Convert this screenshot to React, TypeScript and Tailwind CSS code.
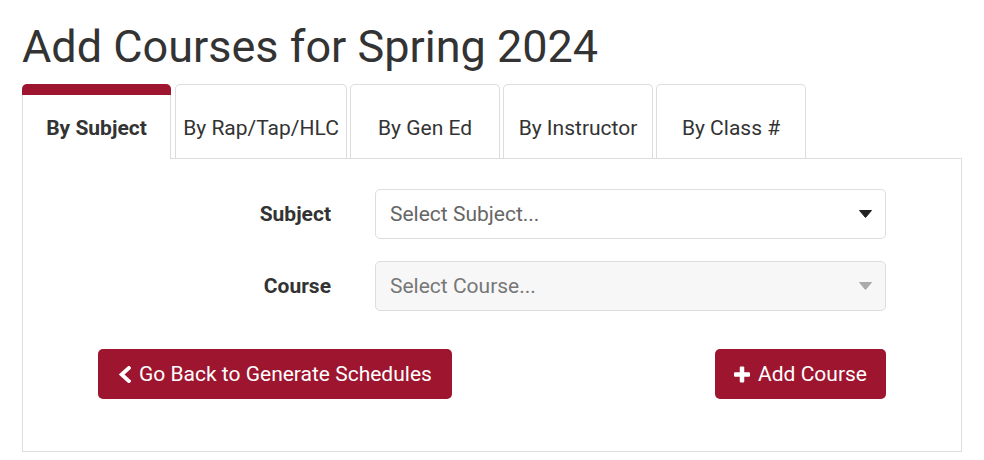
import React from "react";

const tabs = ["By Subject", "By Rap/Tap/HLC", "By Gen Ed", "By Instructor", "By Class #"];
const tabW = ["w-[149px]", "w-[172px]", "w-[150px]", "w-[150px]", "w-[150px]"];

function Caret({ color }: { color: string }) {
  return (
    <svg width="13" height="8" viewBox="0 0 13 8" className="shrink-0">
      <path d="M0.5 0.5 L12.5 0.5 L6.5 7.5 Z" fill={color} stroke={color} strokeWidth="1" strokeLinejoin="round" />
    </svg>
  );
}

function ChevronLeft() {
  return (
    <svg width="13" height="17" viewBox="0 0 13 17" className="shrink-0">
      <path d="M10.8 2 L3.6 8.5 L10.8 15" fill="none" stroke="white" strokeWidth="3.8" strokeLinecap="square" strokeLinejoin="miter" />
    </svg>
  );
}

function Plus() {
  return (
    <svg width="16" height="17" viewBox="0 0 16 17" className="shrink-0">
      <rect x="5.75" y="0.5" width="4.5" height="16" rx="1" fill="white" />
      <rect x="0" y="6.25" width="16" height="4.5" rx="1" fill="white" />
    </svg>
  );
}

export default function App() {
  return (
    <div
      className="w-[984px] h-[460px] bg-white text-[#333] overflow-hidden"
      style={{ fontFamily: "Roboto, 'Liberation Sans', sans-serif" }}
    >
      <div className="pl-[22px] pr-[22px]">
        <h1 className="pt-[20px] text-[45px] leading-[53px] font-normal text-[#333]">
          Add Courses for Spring 2024
        </h1>
        <div className="mt-[11px] flex items-end gap-[3px]">
          {tabs.map((t, i) =>
            i === 0 ? (
              <div
                key={t}
                className={`relative z-10 -mb-px flex h-[75px] ${tabW[i]} flex-col rounded-t-[5px] border-x border-[#ddd] bg-white`}
              >
                <div className="-mx-px h-[11px] rounded-t-[5px] bg-[#9d152e]" />
                <div className="flex flex-1 items-center justify-center pt-[3px] text-[21px] font-bold text-[#333]">
                  {t}
                </div>
              </div>
            ) : (
              <div
                key={t}
                className={`flex h-[74px] ${tabW[i]} items-center justify-center rounded-t-[5px] border border-b-0 border-[#ddd] bg-white pt-[15px] text-[21px] text-[#333] ${
                  i === 1 ? "ml-[1px]" : ""
                }`}
              >
                {t}
              </div>
            )
          )}
        </div>
        <div className="h-[294px] w-[940px] border border-[#ddd] pt-[30px]">
          <div className="ml-[75px] w-[788px]">
            <div className="flex items-center">
              <div className="w-[233px] pt-[2px] text-right text-[21px] font-bold text-[#333]">Subject</div>
              <div className="ml-[44px] flex h-[50px] flex-1 items-center justify-between rounded-[5px] border border-[#ddd] bg-white pl-[14px] pr-[13px] text-[21px] text-[#666]">
                <span className="pt-[2px]">Select Subject...</span>
                <Caret color="#222" />
              </div>
            </div>
            <div className="mt-[22px] flex items-center">
              <div className="w-[233px] pt-[2px] text-right text-[21px] font-bold text-[#333]">Course</div>
              <div className="ml-[44px] flex h-[50px] flex-1 items-center justify-between rounded-[5px] border border-[#ddd] bg-[#f7f7f7] pl-[14px] pr-[13px] text-[21px] text-[#777]">
                <span className="pt-[2px]">Select Course...</span>
                <Caret color="#aaa" />
              </div>
            </div>
            <div className="mt-[38px] flex items-center justify-between">
              <button className="flex h-[50px] items-center gap-[8px] rounded-[5px] bg-[#9d152e] pl-[20px] pr-[20px] text-[21px] text-white">
                <ChevronLeft />
                <span className="pt-[2px]">Go Back to Generate Schedules</span>
              </button>
              <button className="flex h-[50px] items-center gap-[8px] rounded-[5px] bg-[#9d152e] pl-[19px] pr-[19px] text-[21px] text-white">
                <Plus />
                <span className="pt-[2px]">Add Course</span>
              </button>
            </div>
          </div>
        </div>
      </div>
    </div>
  );
}
